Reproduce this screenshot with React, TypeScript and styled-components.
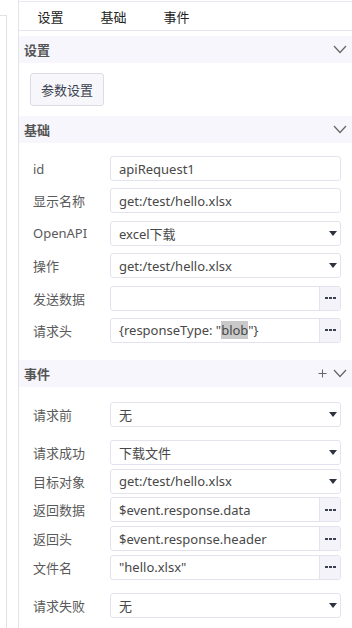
import React from "react"
import styled, { createGlobalStyle } from "styled-components"

const GlobalStyle = createGlobalStyle`
  body {
    margin: 0;
    background: #fff;
    font-family: "Noto Sans", "Noto Sans CJK SC", sans-serif;
    font-size: 13px;
    color: #444;
  }
`

const Page = styled.div`
  display: flex;
  height: 628px;
  overflow: hidden;
`

const LeftStrip = styled.div`
  width: 18px;
  border-right: 1px solid #e4e4e8;
  display: flex;
  flex-direction: column;
`

const Frame = styled.div`
  margin-top: 15px;
  width: 6px;
  flex: 1;
  border-top: 1px solid #e2e2e2;
  border-right: 1px solid #e2e2e2;
`

const Panel = styled.div`
  flex: 1;
  margin-top: 1px;
  border-top: 1px solid #e9e9f4;
  display: flex;
  flex-direction: column;
`

const Tabs = styled.div`
  display: flex;
  height: 28px;
  border-bottom: 1px solid #e6e6f2;
`

const Tab = styled.div`
  width: 63px;
  display: flex;
  align-items: center;
  justify-content: center;
  color: #222;
  font-size: 13px;
`

const SectionHeader = styled.div<{ $first?: boolean }>`
  margin-top: ${(p) => (p.$first ? "5px" : "0")};
  height: 27px;
  background: #f6f6fc;
  display: flex;
  align-items: center;
  padding: 0 5px;
  color: #555;
  font-weight: bold;
  font-size: 13px;
`

const HeaderTitle = styled.span`
  flex: 1;
`

const HeaderIcons = styled.div`
  display: flex;
  align-items: center;
  gap: 6px;
  color: #555;
`

const SettingsBody = styled.div`
  padding: 10px 11px;
`

const Button = styled.button`
  height: 33px;
  width: 74px;
  background: #f7f7fb;
  border: 1px solid #dcdce4;
  border-radius: 3px;
  color: #3a4252;
  font-family: inherit;
  font-size: 13px;
  padding: 0;
`

const FormBody = styled.div<{ $top: number; $bottom: number }>`
  padding: ${(p) => p.$top}px 11px ${(p) => p.$bottom}px 14px;
  display: flex;
  flex-direction: column;
  gap: 13px;
`

const Group = styled.div<{ $gap: number }>`
  display: flex;
  flex-direction: column;
  gap: ${(p) => p.$gap}px;
`

const Row = styled.div`
  display: flex;
  align-items: center;
  height: 25px;
`

const Label = styled.div`
  width: 77px;
  color: #5a5a5a;
  font-size: 13px;
  white-space: nowrap;
`

const Field = styled.div`
  flex: 1;
  height: 100%;
  box-sizing: border-box;
  border: 1px solid #e3e3ef;
  border-radius: 3px;
  display: flex;
  align-items: center;
  background: #fff;
  overflow: hidden;
`

const Value = styled.div`
  flex: 1;
  padding-left: 8px;
  color: #484848;
  white-space: nowrap;
`

const Selected = styled.span`
  background: #c9c9c9;
`

const Caret = styled.div`
  width: 0;
  height: 0;
  border-left: 4px solid transparent;
  border-right: 4px solid transparent;
  border-top: 5px solid #2e3340;
  margin-right: 3px;
`

const MoreBox = styled.div`
  width: 20px;
  height: 100%;
  background: #f3f3f9;
  border-left: 1px solid #e3e3ef;
  display: flex;
  align-items: center;
  justify-content: center;
  gap: 1px;
`

const Dot = styled.i`
  width: 3px;
  height: 2px;
  background: #3a4050;
`

const Chevron = () => (
  <svg width="14" height="9" viewBox="0 0 14 9">
    <path d="M1 1 L7 7.5 L13 1" fill="none" stroke="#666" strokeWidth="1.2" />
  </svg>
)

const Plus = () => (
  <svg width="9" height="9" viewBox="0 0 9 9">
    <path d="M4.5 0.5 V8.5 M0.5 4.5 H8.5" stroke="#666" strokeWidth="1" />
  </svg>
)

type Kind = "input" | "select" | "more"

const FormRow = ({ label, kind = "input", children }: { label: string; kind?: Kind; children?: React.ReactNode }) => (
  <Row>
    <Label>{label}</Label>
    <Field>
      <Value>{children}</Value>
      {kind === "select" && <Caret />}
      {kind === "more" && (
        <MoreBox>
          <Dot />
          <Dot />
          <Dot />
        </MoreBox>
      )}
    </Field>
  </Row>
)

export default function App() {
  return (
    <>
      <GlobalStyle />
      <Page>
        <LeftStrip>
          <Frame />
        </LeftStrip>
        <Panel>
          <Tabs>
            <Tab>设置</Tab>
            <Tab>基础</Tab>
            <Tab>事件</Tab>
          </Tabs>

          <SectionHeader $first>
            <HeaderTitle>设置</HeaderTitle>
            <HeaderIcons>
              <Chevron />
            </HeaderIcons>
          </SectionHeader>
          <SettingsBody>
            <Button>参数设置</Button>
          </SettingsBody>

          <SectionHeader>
            <HeaderTitle>基础</HeaderTitle>
            <HeaderIcons>
              <Chevron />
            </HeaderIcons>
          </SectionHeader>
          <FormBody $top={13} $bottom={17}>
            <Group $gap={7.4}>
              <FormRow label="id">apiRequest1</FormRow>
              <FormRow label="显示名称">get:/test/hello.xlsx</FormRow>
              <FormRow label="OpenAPI" kind="select">excel下载</FormRow>
              <FormRow label="操作" kind="select">get:/test/hello.xlsx</FormRow>
              <FormRow label="发送数据" kind="more" />
              <FormRow label="请求头" kind="more">
                {"{responseType: \""}
                <Selected>blob</Selected>
                {"\"}"}
              </FormRow>
            </Group>
          </FormBody>

          <SectionHeader>
            <HeaderTitle>事件</HeaderTitle>
            <HeaderIcons>
              <Plus />
              <Chevron />
            </HeaderIcons>
          </SectionHeader>
          <FormBody $top={15} $bottom={10}>
            <FormRow label="请求前" kind="select">无</FormRow>
            <Group $gap={3.75}>
              <FormRow label="请求成功" kind="select">下载文件</FormRow>
              <FormRow label="目标对象" kind="select">get:/test/hello.xlsx</FormRow>
              <FormRow label="返回数据" kind="more">$event.response.data</FormRow>
              <FormRow label="返回头" kind="more">$event.response.header</FormRow>
              <FormRow label="文件名" kind="more">"hello.xlsx"</FormRow>
            </Group>
            <FormRow label="请求失败" kind="select">无</FormRow>
          </FormBody>
        </Panel>
      </Page>
    </>
  )
}
